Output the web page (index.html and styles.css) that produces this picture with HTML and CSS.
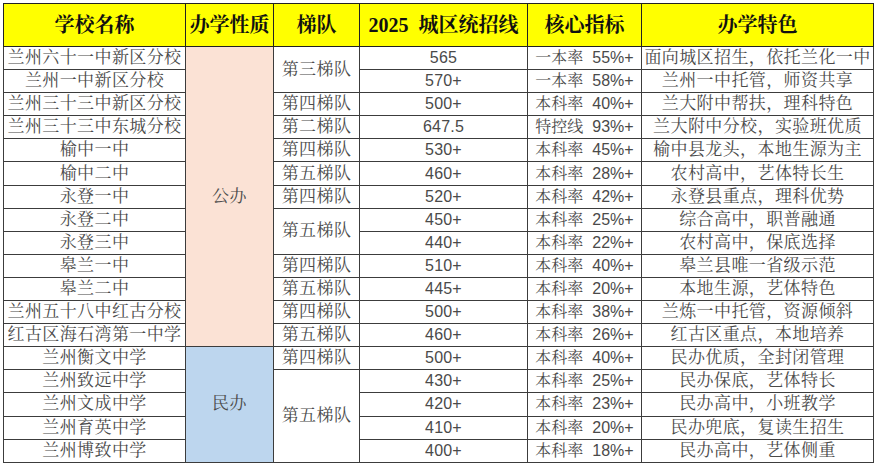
FILE: index.html
```html
<!DOCTYPE html>
<html lang="zh">
<head>
<meta charset="utf-8">
<link rel="stylesheet" href="styles.css">
</head>
<body>
<div class="page">
<table class="grid">
  <colgroup>
    <col class="c-name"><col class="c-type"><col class="c-tier"><col class="c-line"><col class="c-kpi"><col class="c-feat">
  </colgroup>
  <thead>
    <tr class="head">
      <th>学校名称</th><th>办学性质</th><th>梯队</th><th>2025&nbsp;&nbsp;城区统招线</th><th>核心指标</th><th>办学特色</th>
    </tr>
  </thead>
  <tbody>
    <tr><td>兰州六十一中新区分校</td><td class="pub" rowspan="13">公办</td><td rowspan="2">第三梯队</td><td class="num">565</td><td class="kpi">一本率&nbsp;&nbsp;55%+</td><td>面向城区招生，依托兰化一中</td></tr>
    <tr><td>兰州一中新区分校</td><td class="num">570+</td><td class="kpi">一本率&nbsp;&nbsp;58%+</td><td>兰州一中托管，师资共享</td></tr>
    <tr><td>兰州三十三中新区分校</td><td>第四梯队</td><td class="num">500+</td><td class="kpi">本科率&nbsp;&nbsp;40%+</td><td>兰大附中帮扶，理科特色</td></tr>
    <tr><td>兰州三十三中东城分校</td><td>第二梯队</td><td class="num">647.5</td><td class="kpi">特控线&nbsp;&nbsp;93%+</td><td>兰大附中分校，实验班优质</td></tr>
    <tr><td>榆中一中</td><td>第四梯队</td><td class="num">530+</td><td class="kpi">本科率&nbsp;&nbsp;45%+</td><td>榆中县龙头，本地生源为主</td></tr>
    <tr><td>榆中二中</td><td>第五梯队</td><td class="num">460+</td><td class="kpi">本科率&nbsp;&nbsp;28%+</td><td>农村高中，艺体特长生</td></tr>
    <tr><td>永登一中</td><td>第四梯队</td><td class="num">520+</td><td class="kpi">本科率&nbsp;&nbsp;42%+</td><td>永登县重点，理科优势</td></tr>
    <tr><td>永登二中</td><td rowspan="2">第五梯队</td><td class="num">450+</td><td class="kpi">本科率&nbsp;&nbsp;25%+</td><td>综合高中，职普融通</td></tr>
    <tr><td>永登三中</td><td class="num">440+</td><td class="kpi">本科率&nbsp;&nbsp;22%+</td><td>农村高中，保底选择</td></tr>
    <tr><td>皋兰一中</td><td>第四梯队</td><td class="num">510+</td><td class="kpi">本科率&nbsp;&nbsp;40%+</td><td>皋兰县唯一省级示范</td></tr>
    <tr><td>皋兰二中</td><td>第五梯队</td><td class="num">445+</td><td class="kpi">本科率&nbsp;&nbsp;20%+</td><td>本地生源，艺体特色</td></tr>
    <tr><td>兰州五十八中红古分校</td><td>第四梯队</td><td class="num">500+</td><td class="kpi">本科率&nbsp;&nbsp;38%+</td><td>兰炼一中托管，资源倾斜</td></tr>
    <tr><td>红古区海石湾第一中学</td><td>第五梯队</td><td class="num">460+</td><td class="kpi">本科率&nbsp;&nbsp;26%+</td><td>红古区重点，本地培养</td></tr>
    <tr><td>兰州衡文中学</td><td class="pri" rowspan="5">民办</td><td>第四梯队</td><td class="num">500+</td><td class="kpi">本科率&nbsp;&nbsp;40%+</td><td>民办优质，全封闭管理</td></tr>
    <tr><td>兰州致远中学</td><td rowspan="4">第五梯队</td><td class="num">430+</td><td class="kpi">本科率&nbsp;&nbsp;25%+</td><td>民办保底，艺体特长</td></tr>
    <tr><td>兰州文成中学</td><td class="num">420+</td><td class="kpi">本科率&nbsp;&nbsp;23%+</td><td>民办高中，小班教学</td></tr>
    <tr><td>兰州育英中学</td><td class="num">410+</td><td class="kpi">本科率&nbsp;&nbsp;20%+</td><td>民办兜底，复读生招生</td></tr>
    <tr><td>兰州博致中学</td><td class="num">400+</td><td class="kpi">本科率&nbsp;&nbsp;18%+</td><td>民办高中，艺体侧重</td></tr>
  </tbody>
</table>
</div>
</body>
</html>
```

FILE: styles.css
```css
html, body {
  margin: 0;
  padding: 0;
  background: #ffffff;
}

.page {
  padding: 3px 0 0 3px;
}

.grid {
  border-collapse: collapse;
  table-layout: fixed;
  width: 870px;
  font-family: "Liberation Sans", "Noto Serif CJK SC", "Noto Sans CJK SC", sans-serif;
  color: #4a4a4a;
  font-size: 17px;
}

.c-name { width: 182px; }
.c-type { width: 88px; }
.c-tier { width: 86px; }
.c-line { width: 168px; }
.c-kpi  { width: 114px; }
.c-feat { width: 232px; }

.grid th,
.grid td {
  border: 1px solid #3c3c3c;
  padding: 0;
  text-align: center;
  vertical-align: middle;
  white-space: nowrap;
  overflow: hidden;
  line-height: 20px;
}

.head th {
  height: 42px;
  background: #ffff00;
  color: #111111;
  font-family: "Liberation Serif", "Noto Serif CJK SC", "Noto Sans CJK SC", serif;
  font-weight: bold;
  font-size: 20px;
  border-color: #222222;
}

.grid tbody tr {
  height: 23.1px;
}

.grid tbody td {
  letter-spacing: 0.4px;
}

.grid tbody td.kpi {
  font-size: 16px;
  letter-spacing: 0;
}

.grid tbody td.num {
  font-size: 16px;
  letter-spacing: 0.2px;
}

.pub {
  background: #fbe2d5;
}

.pri {
  background: #bdd6ee;
}
```
